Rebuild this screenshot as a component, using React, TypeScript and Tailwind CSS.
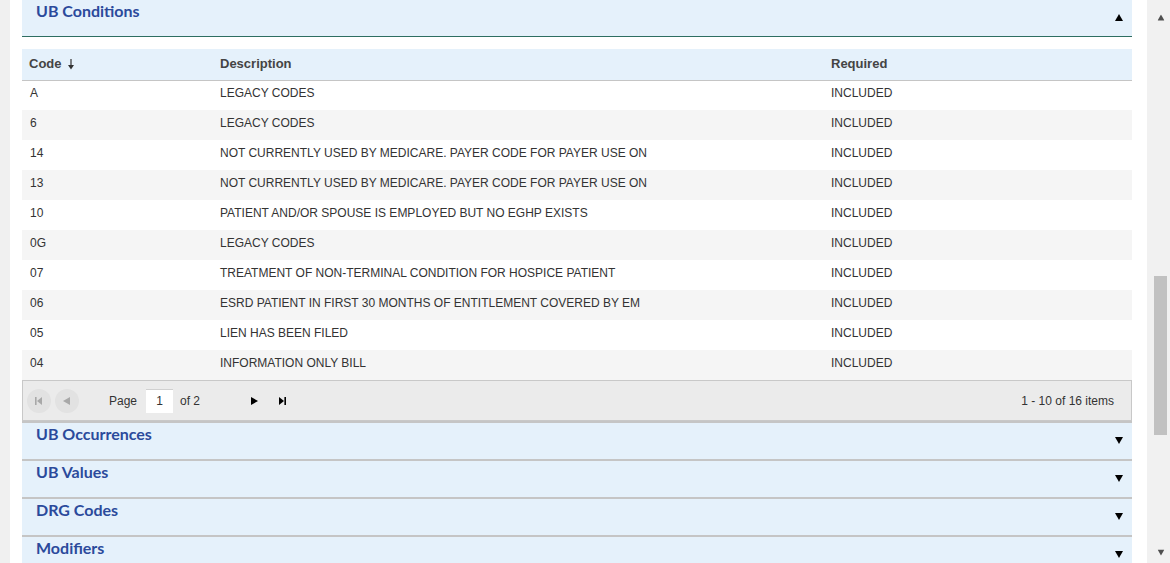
import React from "react";

const rows: [string, string][] = [
  ["A", "LEGACY CODES"],
  ["6", "LEGACY CODES"],
  ["14", "NOT CURRENTLY USED BY MEDICARE. PAYER CODE FOR PAYER USE ON"],
  ["13", "NOT CURRENTLY USED BY MEDICARE. PAYER CODE FOR PAYER USE ON"],
  ["10", "PATIENT AND/OR SPOUSE IS EMPLOYED BUT NO EGHP EXISTS"],
  ["0G", "LEGACY CODES"],
  ["07", "TREATMENT OF NON-TERMINAL CONDITION FOR HOSPICE PATIENT"],
  ["06", "ESRD PATIENT IN FIRST 30 MONTHS OF ENTITLEMENT COVERED BY EM"],
  ["05", "LIEN HAS BEEN FILED"],
  ["04", "INFORMATION ONLY BILL"],
];

const collapsed = ["UB Occurrences", "UB Values", "DRG Codes", "Modifiers"];

const Tri = ({ dir, className }: { dir: "up" | "down" | "left" | "right"; className?: string }) => {
  const pts = {
    up: "0,7 4,0 8,7",
    down: "0,0 8,0 4,7",
    left: "7,0 7,8 0,4",
    right: "0,0 0,8 7,4",
  }[dir];
  return (
    <svg width="8" height="8" viewBox="0 0 8 8" className={className}>
      <polygon points={pts} fill="currentColor" />
    </svg>
  );
};

const EdgeIcon = ({ dir, className }: { dir: "first" | "last"; className?: string }) => (
  <svg width="8" height="8" viewBox="0 0 8 8" className={className}>
    {dir === "first" ? (
      <>
        <rect x="0" y="0" width="1.6" height="8" fill="currentColor" />
        <polygon points="7,0 7,8 2,4" fill="currentColor" />
      </>
    ) : (
      <>
        <polygon points="1,0 1,8 6,4" fill="currentColor" />
        <rect x="6.4" y="0" width="1.6" height="8" fill="currentColor" />
      </>
    )}
  </svg>
);

const SortDown = () => (
  <svg width="8" height="12" viewBox="0 0 8 12" className="ml-[5px] mt-[1px]">
    <line x1="4" y1="1" x2="4" y2="8" stroke="#333" strokeWidth="1.2" />
    <polygon points="1,7 7,7 4,11.5" fill="#333" />
  </svg>
);

function SectionHeader({ title, open }: { title: string; open?: boolean }) {
  return (
    <div className="h-[36px] bg-[#e5f1fb] flex items-start justify-between pl-[14px] pr-[9px]">
      <span className="pt-[1px] leading-[20px] text-[16px] font-bold text-[#2b4a9b] font-['Lato',sans-serif]">
        {title}
      </span>
      <Tri dir={open ? "up" : "down"} className="mt-[14px] text-black" />
    </div>
  );
}

export default function App() {
  return (
    <div className="h-[563px] w-[1170px] overflow-hidden flex bg-white font-['Liberation_Sans',Arial,sans-serif]">
      <div className="w-[10px] bg-[#f0f0f0]" />
      <div className="w-[12px]" />
      <div className="w-[1110px] flex flex-col">
        <div className="shrink-0 border-b border-[#2e6e62]">
          <SectionHeader title="UB Conditions" open />
        </div>
        <div className="shrink-0 h-[12px]" />
        <table className="shrink-0 w-full border-collapse table-fixed">
          <colgroup>
            <col className="w-[191px]" />
            <col className="w-[611px]" />
            <col className="w-[308px]" />
          </colgroup>
          <thead>
            <tr className="h-[31px] bg-[#e5f1fb] border-b border-[#c5c5c5] text-[13px] text-[#444] text-left">
              <th className="pl-[7px] pb-[1px] font-bold">
                <span className="flex items-center">
                  Code
                  <SortDown />
                </span>
              </th>
              <th className="pl-[7px] pb-[1px] font-bold">Description</th>
              <th className="pl-[7px] pb-[1px] font-bold">Required</th>
            </tr>
          </thead>
          <tbody>
            {rows.map(([code, desc], i) => (
              <tr
                key={i}
                className={`h-[30px] text-[12px] text-[#333] ${i % 2 === 1 ? "bg-[#f5f5f5]" : "bg-white"}`}
              >
                <td className="pl-[8px] pb-[4px]">{code}</td>
                <td className="pl-[7px] pb-[4px]">{desc}</td>
                <td className="pl-[7px] pb-[4px]">INCLUDED</td>
              </tr>
            ))}
          </tbody>
        </table>
        <div className="shrink-0 h-[41px] bg-[#ebebeb] border border-[#c8c8c8] flex items-center text-[12px] text-[#333]">
          <div className="ml-[4px] w-[24px] h-[24px] rounded-full bg-[#e2e2e2] flex items-center justify-center text-[#a8a8a8]">
            <EdgeIcon dir="first" />
          </div>
          <div className="ml-[4px] w-[24px] h-[24px] rounded-full bg-[#e2e2e2] flex items-center justify-center text-[#a8a8a8]">
            <Tri dir="left" />
          </div>
          <span className="ml-[30px]">Page</span>
          <div className="ml-[9px] w-[27px] h-[24px] bg-white border-t border-[#d0d0d0] flex items-center justify-center">
            1
          </div>
          <span className="ml-[7px]">of 2</span>
          <div className="ml-[47px] w-[16px] flex justify-center text-black">
            <Tri dir="right" />
          </div>
          <div className="ml-[11px] w-[16px] flex justify-center text-black">
            <EdgeIcon dir="last" />
          </div>
          <span className="ml-auto mr-[17px]">1 - 10 of 16 items</span>
        </div>
        {collapsed.map((t) => (
          <div key={t} className="shrink-0 border-t-2 border-[#c5c5c5]">
            <SectionHeader title={t} />
          </div>
        ))}
      </div>
      <div className="w-[15px]" />
      <div className="w-[23px] bg-[#f1f1f1] flex flex-col items-center">
        <Tri dir="up" className="shrink-0 mt-[14px] ml-[5px] text-[#505050] scale-[0.85]" />
        <div className="shrink-0 mt-[254px] ml-[4px] w-[13px] h-[159px] bg-[#c1c1c1]" />
        <div className="flex-1" />
        <Tri dir="down" className="shrink-0 mb-[6px] ml-[5px] text-[#505050] scale-[0.85]" />
      </div>
    </div>
  );
}
